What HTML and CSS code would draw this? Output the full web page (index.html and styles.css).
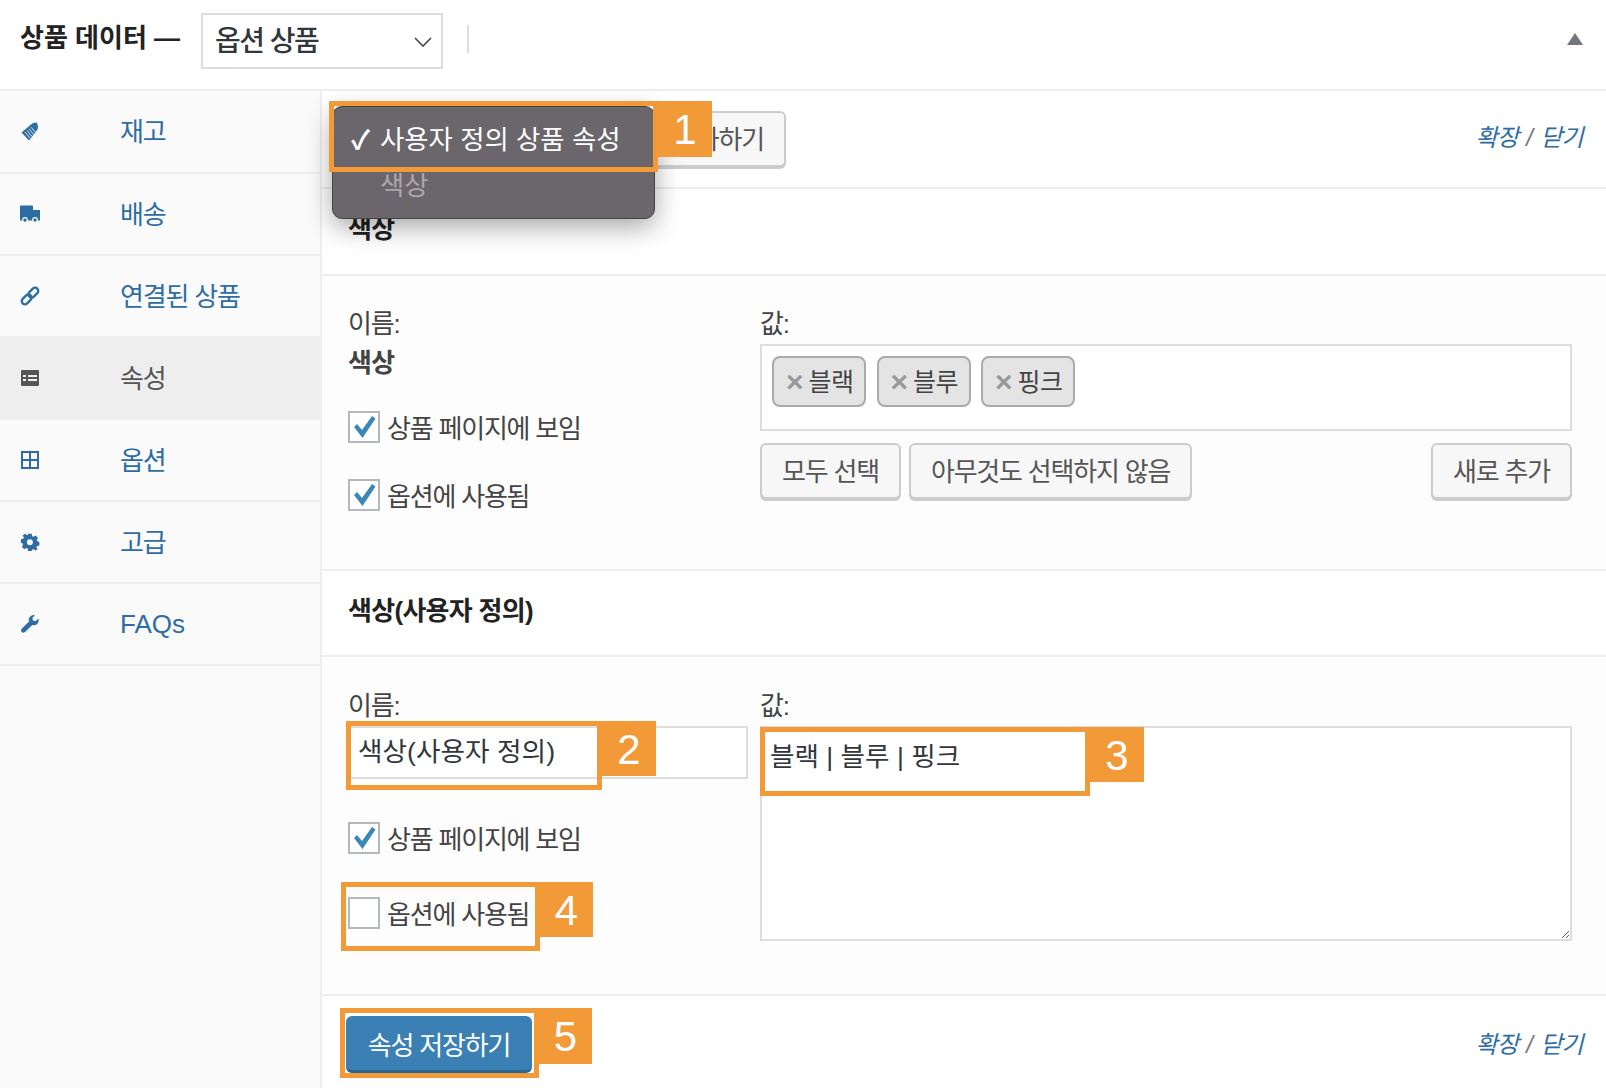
FILE: index.html
```html
<!DOCTYPE html>
<html lang="ko">
<head>
<meta charset="utf-8">
<title>상품 데이터</title>
<link rel="stylesheet" href="styles.css">
</head>
<body>
<div class="panel">
  <header class="panel-head">
    <h2 class="panel-title">상품 데이터 —</h2>
    <div class="type-select">
      <span>옵션 상품</span>
      <svg class="chevron" viewBox="0 0 18 10"><path d="M1 1l8 8 8-8" fill="none" stroke="#444" stroke-width="1.6"/></svg>
    </div>
    <span class="head-divider"></span>
    <span class="collapse-arrow"></span>
  </header>
  <div class="panel-body">
    <nav class="tabs">
      <a class="tab tab-first">
        <svg class="tab-icon tab-icon-wide" viewBox="0 0 20 20"><path d="M1.500 10.500L11 2.500l2-1.500 4-.500 1 4-.500 3-8.500 11z" fill="#2e6da4"/><path d="M5 10l5 6M7 8.500l5 6M9 6.800l5 6M11 5.200l4.500 5.300" stroke="#dfe9f2" stroke-width="1"/></svg>
        <span>재고</span>
      </a>
      <a class="tab">
        <svg class="tab-icon tab-icon-wide" viewBox="0 0 20 18"><path d="M0 1.500a1 1 0 0 1 1-1h11a1 1 0 0 1 1 1V5h7v10.500H0z" fill="#2e6da4"/><circle cx="5" cy="15" r="2.300" fill="#2e6da4" stroke="#fafafa" stroke-width="1.200"/><circle cx="15" cy="15" r="2.300" fill="#2e6da4" stroke="#fafafa" stroke-width="1.200"/></svg>
        <span>배송</span>
      </a>
      <a class="tab">
        <svg class="tab-icon" viewBox="0 0 20 20"><g transform="rotate(-45 10 10)" fill="none" stroke="#2e6da4" stroke-width="2.600"><rect x="-1.500" y="6.500" width="12.500" height="7" rx="3.500"/><rect x="9" y="6.500" width="12.500" height="7" rx="3.500"/></g></svg>
        <span>연결된 상품</span>
      </a>
      <a class="tab tab-active">
        <svg class="tab-icon" viewBox="0 0 18 16"><path fill-rule="evenodd" d="M1 0h16a1 1 0 0 1 1 1v14a1 1 0 0 1-1 1H1a1 1 0 0 1-1-1V1a1 1 0 0 1 1-1zM2 5v2h3V5zm5 0v2h9V5zM2 9v2h3V9zm5 0v2h9V9z" fill="#555"/></svg>
        <span>속성</span>
      </a>
      <a class="tab">
        <svg class="tab-icon" viewBox="0 0 18 18"><path fill-rule="evenodd" d="M0 0h18v18H0zM2 2v6h6V2zm8 0v6h6V2zM2 10v6h6v-6zm8 0v6h6v-6z" fill="#2e6da4"/></svg>
        <span>옵션</span>
      </a>
      <a class="tab">
        <svg class="tab-icon" viewBox="0 0 18 18"><path fill-rule="evenodd" d="M7 0h4l.500 2.600 1.600.700L15.300 1.800l2.800 2.800-1.500 2.200.700 1.600 2.200.600v4l-2.600.500-.700 1.600 1.500 2.200-2.800 1.200-1.700-1.500-1.600.700L11 19H7l-.500-2.600-1.600-.700-2.200 1.500L0 14.400l1.500-2.200-.700-1.600L-1 10V6l2.600-.500.700-1.600L.900 1.800 3.700 0l2.200 1.500L7 .800zM9 6a3.300 3.300 0 1 0 0 6.600A3.300 3.300 0 0 0 9 6z" fill="#2e6da4" transform="translate(0.800 0.800) scale(.9)"/></svg>
        <span>고급</span>
      </a>
      <a class="tab tab-latin">
        <svg class="tab-icon" viewBox="0 0 18 18"><path d="M17.500 3.500l-3 2.700-2.500-.700-.700-2.500L14 .200A5 5 0 0 0 8 6.500L.700 13.700a2.300 2.300 0 0 0 3.300 3.300L11.300 10a5 5 0 0 0 6.200-6.500z" fill="#2e6da4"/></svg>
        <span>FAQs</span>
      </a>
    </nav>
    <main class="content">
      <div class="toolbar">
        <div class="toolbar-left">
          <span class="attr-select"></span>
          <button class="btn">추가하기</button>
        </div>
        <div class="links"><a>확장</a> / <a>닫기</a></div>
      </div>
      <section class="attr">
        <h3 class="attr-head">색상</h3>
        <div class="attr-grid attr-grid-first">
          <div class="attr-col">
            <div class="field-label">이름:</div>
            <strong class="attr-name">색상</strong>
            <label class="check-row check-row-first">
              <span class="checkbox"><svg viewBox="0 0 28 28"><path d="M4 14l3-3 5 6L22 3l3.500 2.500L12.500 25z" fill="#3b87b8"/></svg></span>
              <span class="check-text">상품 페이지에 보임</span>
            </label>
            <label class="check-row check-row-second">
              <span class="checkbox"><svg viewBox="0 0 28 28"><path d="M4 14l3-3 5 6L22 3l3.500 2.500L12.500 25z" fill="#3b87b8"/></svg></span>
              <span class="check-text">옵션에 사용됨</span>
            </label>
          </div>
          <div class="attr-col">
            <div class="field-label">값:</div>
            <div class="tag-box">
              <span class="tag"><i class="tag-x">×</i>블랙</span>
              <span class="tag"><i class="tag-x">×</i>블루</span>
              <span class="tag"><i class="tag-x">×</i>핑크</span>
            </div>
            <div class="btn-row">
              <button class="btn">모두 선택</button>
              <button class="btn">아무것도 선택하지 않음</button>
              <button class="btn btn-end">새로 추가</button>
            </div>
          </div>
        </div>
      </section>
      <section class="attr">
        <h3 class="attr-head attr-head-second">색상(사용자 정의)</h3>
        <div class="attr-grid attr-grid-second">
          <div class="attr-col">
            <div class="field-label">이름:</div>
            <input class="text-input" value="색상(사용자 정의)">
            <label class="check-row check-row-third">
              <span class="checkbox"><svg viewBox="0 0 28 28"><path d="M4 14l3-3 5 6L22 3l3.500 2.500L12.500 25z" fill="#3b87b8"/></svg></span>
              <span class="check-text">상품 페이지에 보임</span>
            </label>
            <label class="check-row check-row-fourth">
              <span class="checkbox"></span>
              <span class="check-text">옵션에 사용됨</span>
            </label>
          </div>
          <div class="attr-col">
            <div class="field-label">값:</div>
            <textarea class="text-area">블랙 | 블루 | 핑크</textarea>
          </div>
        </div>
      </section>
      <div class="footer-bar">
        <button class="btn btn-primary">속성 저장하기</button>
        <div class="links"><a>확장</a> / <a>닫기</a></div>
      </div>
    </main>
  </div>
</div>

<div class="popup">
  <div class="popup-item popup-item-on"><span class="popup-check">✓</span>사용자 정의 상품 속성</div>
  <div class="popup-item popup-item-dim">색상</div>
</div>

<div class="callout callout-1"><b class="callout-num">1</b></div>
<div class="callout callout-2"><b class="callout-num">2</b></div>
<div class="callout callout-3"><b class="callout-num">3</b></div>
<div class="callout callout-4"><b class="callout-num">4</b></div>
<div class="callout callout-5"><b class="callout-num">5</b></div>
</body>
</html>
```
FILE: styles.css
```css
* { box-sizing: border-box; }
html, body { margin: 0; height: 1088px; overflow: hidden; background: #fff; }
body {
  position: relative;
  font-family: "Liberation Sans", "Noto Sans CJK KR", sans-serif;
  font-size: 26px;
  letter-spacing: -1.2px;
  color: #444;
}
.panel { height: 1088px; display: flex; flex-direction: column; }
.panel-head {
  height: 91px;
  flex: none;
  display: flex;
  align-items: center;
  padding: 0 23px 17px 20px;
  border-bottom: 2px solid #eee;
}
.panel-title { margin: -2px 0 0; font-size: 26px; font-weight: 700; color: #222; width: 181px; flex: none; letter-spacing: 0; }
.type-select {
  width: 242px;
  height: 56px;
  margin-top: 9px;
  border: 2px solid #ddd;
  padding: 0 9px 4px 12px;
  display: flex;
  align-items: center;
  justify-content: space-between;
  font-size: 28px;
  font-weight: 500;
  letter-spacing: -1.500px;
  color: #32373c;
  flex: none;
}
.chevron { width: 18px; height: 10px; margin-top: 6px; }
.head-divider { width: 2px; height: 28px; background: #ddd; margin: 5px 0 0 24px; flex: none; }
.collapse-arrow {
  margin: 5px 0 0 auto;
  border-left: 8px solid transparent;
  border-right: 8px solid transparent;
  border-bottom: 12px solid #72777c;
}
.panel-body { flex: 1; display: flex; min-height: 0; }
.tabs { width: 322px; flex: none; background: #fafafa; border-right: 2px solid #eee; }
.tab {
  height: 82px;
  display: flex;
  align-items: center;
  padding-left: 21px;
  border-bottom: 2px solid #eee;
  color: #2e6da4;
  font-size: 26px;
}
.tab span { margin-bottom: 4px; }
.tab-latin span { margin-bottom: 0; letter-spacing: 0; }
.tab-first { height: 83px; }
.tab-active { height: 84px; margin-top: -2px; background: #eee; color: #555; border-bottom: 0; position: relative; }
.tab-icon { width: 18px; height: 18px; flex: none; margin-right: 81px; overflow: visible; }
.tab-icon-wide { width: 20px; height: 20px; margin: 0 80px 0 -1px; }
.content { flex: 1; min-width: 0; }
.toolbar {
  height: 98px;
  padding: 20px 23px 0 26px;
  display: flex;
  justify-content: space-between;
  border-bottom: 2px solid #eee;
}
.toolbar-left { display: flex; gap: 0; height: 57px; }
.attr-select { width: 303px; }
.btn {
  height: 56px;
  padding: 0 20px 4px;
  background: #f7f7f7;
  border: 2px solid #ccc;
  border-radius: 6px;
  box-shadow: 0 2px 0 #ccc;
  color: #555;
  font: inherit;
  letter-spacing: inherit;
}
.links { font-style: italic; color: #777; font-size: 24px; letter-spacing: -.7px; word-spacing: 2px; padding-top: 7px; white-space: nowrap; }
.links a { color: #2e6da4; }
.attr-head {
  margin: 0;
  height: 87px;
  padding: 25px 0 0 26px;
  font-size: 26px;
  font-weight: 700;
  letter-spacing: -.7px;
  color: #222;
  background: #fff;
  border-bottom: 2px solid #eee;
  line-height: 30px;
}
.attr-head-second { height: 86px; padding-top: 25px; }
.attr-grid {
  display: grid;
  grid-template-columns: 400px 812px;
  column-gap: 12px;
  padding: 33px 0 0 26px;
  background: #fdfdfd;
  border-bottom: 2px solid #eee;
}
.attr-grid-first { height: 295px; }
.attr-grid-second { height: 339px; padding-top: 34px; }
.field-label { line-height: 30px; height: 36px; color: #444; }
.attr-name { display: block; line-height: 30px; color: #444; margin-top: 3px; letter-spacing: -.7px; }
.check-row { display: flex; align-items: center; gap: 7px; line-height: 32px; height: 32px; }
.check-text { margin-top: 4px; }
.check-row-first { margin-top: 33px; }
.check-row-second { margin-top: 36px; }
.check-row-third { margin-top: 43px; }
.check-row-fourth { margin-top: 43px; }
.checkbox {
  width: 32px;
  height: 32px;
  flex: none;
  border: 2px solid #b4b9be;
  background: #fff;
  display: flex;
  align-items: center;
  justify-content: center;
}
.checkbox svg { width: 28px; height: 28px; }
.tag-box {
  height: 87px;
  margin-top: -1px;
  border: 2px solid #ddd;
  background: #fff;
  padding: 10px;
  display: flex;
  gap: 10.500px;
  align-items: flex-start;
}
.tag {
  height: 51px;
  width: 94px;
  flex: none;
  padding: 0 0 4px 12px;
  background: #e4e4e4;
  border: 2px solid #aaa;
  border-radius: 8px;
  display: flex;
  align-items: center;
  color: #444;
  font-size: 25px;
  letter-spacing: -.6px;
  white-space: nowrap;
}
.tag-x { font-style: normal; font-weight: 700; color: #999; font-size: 30px; margin: 5px 5px 0 0; letter-spacing: 0; }
.btn-row { display: flex; gap: 8px; margin-top: 12px; }
.btn-end { margin-left: auto; }
.text-input {
  display: block;
  width: 400px;
  height: 53px;
  margin-top: -1px;
  border: 2px solid #ddd;
  background: #fff;
  padding: 0 8px 6px;
  font: inherit;
  font-size: 26.700px;
  letter-spacing: 0;
  color: #32373c;
}
.text-area {
  display: block;
  width: 812px;
  height: 215px;
  margin-top: -1px;
  border: 2px solid #ddd;
  background: #fff;
  padding: 11px 8px;
  font: inherit;
  font-size: 26.600px;
  letter-spacing: 0;
  color: #32373c;
  line-height: 36px;
}
.footer-bar {
  height: 92px;
  padding: 20px 23px 0 24px;
  display: flex;
  justify-content: space-between;
  align-items: flex-start;
}
.btn-primary {
  width: 186px;
  height: 57px;
  padding: 0;
  background: #3a80b4;
  border: 0;
  border-bottom: 3px solid #2a6596;
  box-shadow: none;
  color: #fff;
}
.footer-bar .links { padding-top: 9px; }
.popup {
  position: absolute;
  left: 332px;
  top: 106px;
  width: 323px;
  height: 113px;
  background: #6a666b;
  border: 1px solid #444;
  border-radius: 10px;
  box-shadow: 0 8px 26px rgba(0, 0, 0, .35);
  color: #fff;
  font-size: 26.400px;
  letter-spacing: 0;
}
.popup-item { position: relative; white-space: nowrap; }
.popup-item-on { height: 60px; padding: 17px 0 0 47px; line-height: 32px; }
.popup-check { position: absolute; left: 18px; top: 17px; font-weight: 700; }
.popup-item-dim { color: #aaa7ab; padding-left: 47px; line-height: 32px; margin-top: 3px; }
.callout { position: absolute; border: 5px solid #f29a37; }
.callout-num {
  position: absolute;
  top: -5px;
  padding-top: 2px;
  background: #f29a37;
  color: #fff;
  font: 400 42px "Liberation Sans", sans-serif;
  letter-spacing: 0;
  display: flex;
  align-items: center;
  justify-content: center;
}
.callout-1 { left: 329px; top: 101px; width: 329px; height: 71px; }
.callout-1 .callout-num { left: 324px; width: 54px; height: 56px; }
.callout-2 { left: 346px; top: 721px; width: 256px; height: 69px; }
.callout-2 .callout-num { left: 251px; width: 54px; height: 55px; }
.callout-3 { left: 760px; top: 727px; width: 330px; height: 69px; }
.callout-3 .callout-num { left: 325px; width: 54px; height: 55px; }
.callout-4 { left: 341px; top: 882px; width: 199px; height: 69px; }
.callout-4 .callout-num { left: 194px; width: 53px; height: 55px; }
.callout-5 { left: 340px; top: 1008px; width: 199px; height: 70px; }
.callout-5 .callout-num { left: 194px; width: 53px; height: 56px; }
```
